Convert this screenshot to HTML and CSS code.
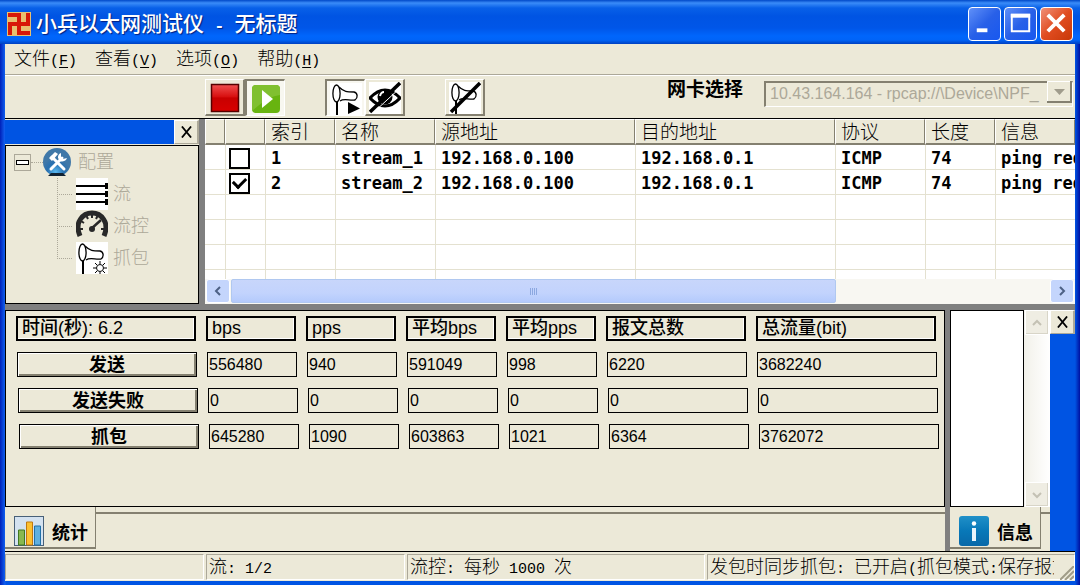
FILE: index.html
```html
<!DOCTYPE html>
<html lang="zh-CN">
<head>
<meta charset="utf-8">
<title>小兵以太网测试仪 - 无标题</title>
<link rel="stylesheet" href="styles.css">
</head>
<body>
<svg class="defs" aria-hidden="true">
  <symbol id="horn" viewBox="0 0 32 32">
    <rect width="32" height="32" fill="#fff"/>
    <path d="M7 18V32" stroke="#000" stroke-width="2"/>
    <path d="M9 4C14 9 17 9 24 9C28 10 28 15 25 17C20 18 14 15 10 18" fill="#fff" stroke="#000" stroke-width="1.3"/>
    <ellipse cx="6.500" cy="10.500" rx="3.600" ry="8.500" fill="#fff" stroke="#000" stroke-width="1.300"/>
  </symbol>
</svg>
<div class="window">
  <header class="titlebar">
    <svg class="logo" viewBox="0 0 24 24" aria-hidden="true">
      <rect width="24" height="24" fill="#e8c070"/>
      <path d="M1 1H14V10H19V1H23V14H14V19H23V23H10V14H5V23H1V10H10V5H1Z" fill="#d81808"/>
    </svg>
    <h1>小兵以太网测试仪<span class="half"> - </span>无标题</h1>
    <button class="winbtn" aria-label="最小化"><svg viewBox="0 0 32 32"><path d="M8 23H19" stroke="#fff" stroke-width="4"/></svg></button>
    <button class="winbtn" aria-label="最大化"><svg viewBox="0 0 32 32"><path d="M7 7H25V24H7Z" fill="none" stroke="#fff" stroke-width="2"/><path d="M6 8H26" stroke="#fff" stroke-width="4"/></svg></button>
    <button class="winbtn close" aria-label="关闭"><svg viewBox="0 0 32 32"><path d="M7 7L24 24M24 7L7 24" stroke="#fff" stroke-width="4"/></svg></button>
  </header>
  <nav class="menu">
    <button>文件<span class="half">(<u>F</u>)</span></button>
    <button>查看<span class="half">(<u>V</u>)</span></button>
    <button>选项<span class="half">(<u>O</u>)</span></button>
    <button>帮助<span class="half">(<u>H</u>)</span></button>
  </nav>
  <div class="toolbar">
    <div class="tools">
      <button class="tool" aria-label="停止"><svg viewBox="0 0 32 32">
        <defs><linearGradient id="red" x2="0" y2="1"><stop offset="0" stop-color="#f05050"/><stop offset=".45" stop-color="#d81010"/><stop offset=".5" stop-color="#c80000"/><stop offset="1" stop-color="#d80000"/></linearGradient></defs>
        <rect x="2.500" y="2.500" width="27" height="27" fill="url(#red)" stroke="#500" stroke-width="1.500"/></svg></button>
      <button class="tool on" aria-label="开始"><svg viewBox="0 0 32 32"><rect x="2" y="2" width="28" height="28" rx="4" fill="#68b410"/><path d="M2 6Q2 2 6 2H26Q30 2 30 6V12Q18 13 2 28Z" fill="#80c030"/><path d="M12 7L23 16L12 25Z" fill="#fff"/></svg></button>
    </div>
    <div class="tools">
      <button class="tool on" aria-label="同步抓包"><svg viewBox="0 0 32 32"><use href="#horn"/><path d="M18 19L30 25.500L18 31Z"/></svg></button>
      <button class="tool" aria-label="隐藏"><svg viewBox="0 0 32 32"><rect width="32" height="32" fill="#fff"/><path d="M1 16Q16 0 31 16Q16 32 1 16Z" fill="none" stroke="#000" stroke-width="3"/><circle cx="16" cy="15" r="7.500"/><path d="M11 14Q12 10 15 10" fill="none" stroke="#fff" stroke-width="2"/><path d="M4 31L32 5" stroke="#fff" stroke-width="1"/><path d="M1 30L31 1" stroke="#000" stroke-width="3.500"/></svg></button>
    </div>
    <div class="tools">
      <button class="tool" aria-label="停止抓包"><svg viewBox="0 0 32 32"><use href="#horn"/><path d="M2 30L31 1" stroke="#000" stroke-width="3.500"/></svg></button>
    </div>
    <label class="nic-label" for="nic">网卡选择</label>
    <div class="combo">
      <select id="nic" disabled><option>10.43.164.164 - rpcap://\Device\NPF_</option></select>
      <svg class="drop" viewBox="0 0 25 22" aria-hidden="true"><rect width="25" height="22" fill="#ece9d8"/><path d="M.5 22V.5H25" fill="none" stroke="#fff"/><path d="M0 21H24V0" fill="none" stroke="#848070" stroke-width="2"/><path d="M7 8H18L12.500 14Z" fill="#a09c8c"/></svg>
    </div>
  </div>

  <main>
    <div class="upper">
      <aside class="side">
        <div class="sidehead"><button class="xbtn" aria-label="关闭配置"><svg viewBox="0 0 12 12"><path d="M1 0L11 12M11 0L1 12"/></svg></button></div>
        <div class="tree">
          <div class="root">
            <span class="minus"></span><span class="dash"></span>
            <svg class="globe" viewBox="0 0 28 28"><defs><radialGradient id="ball" cx=".45" cy=".85"><stop offset="0" stop-color="#58b8f0"/><stop offset=".6" stop-color="#2870b0"/><stop offset="1" stop-color="#4078a8"/></radialGradient></defs>
              <circle cx="14" cy="14" r="14" fill="url(#ball)"/><path d="M5 28H23L20 25H8Z" fill="#123"/><path d="M9 9L21 21M19 10L8 21" stroke="#fff" stroke-width="3" stroke-linecap="round"/><path d="M6 10L12 4L15 6L9 13ZM18 5L18 9L20 11L24 10A5 5 0 0 1 17 13L15 10A5 5 0 0 1 18 5Z" fill="#fff"/></svg>
            <span class="name">配置</span>
          </div>
          <ul>
            <li><svg viewBox="0 0 32 32"><rect width="32" height="32" fill="#fff"/><path d="M0 8H32M0 16H32M0 24H32" stroke="#000" stroke-width="2"/><path d="M30.500 5V11M30.500 13V19M30.500 21V27" stroke="#000" stroke-width="3"/></svg><span class="name">流</span></li>
            <li><svg viewBox="0 0 32 32"><path d="M4 26C-2 12 7 3 16 3S34 12 28 26" fill="none" stroke="#282828" stroke-width="5"/><path d="M5 11L8 13M10 5L12 9M16 3V8M22 5L20 9M2 19H7M25 19H30" stroke="#282828" stroke-width="2"/><path d="M15 19L25 10" stroke="#282828" stroke-width="2.500"/><circle cx="16" cy="19" r="3" fill="#282828"/></svg><span class="name">流控</span></li>
            <li><svg viewBox="0 0 32 32"><use href="#horn"/><circle cx="24" cy="26" r="3.500" fill="#fff" stroke="#000"/><path d="M24 19V22M24 30V32M17 26H20M28 26H31M19 21L21 23M29 21L27 23M19 31L21 29M29 31L27 29" stroke="#000"/></svg><span class="name">抓包</span></li>
          </ul>
        </div>
      </aside>
      <section class="streams">
        <div class="tablewrap">
          <table>
            <colgroup><col class="c20"><col class="c40"><col class="c70"><col class="c100"><col class="c200"><col class="c200"><col class="c90"><col class="c70"><col></colgroup>
            <thead><tr><th></th><th></th><th>索引</th><th>名称</th><th>源地址</th><th>目的地址</th><th>协议</th><th>长度</th><th>信息</th></tr></thead>
            <tbody>
              <tr><td></td><td class="pick"><input type="checkbox" aria-label="stream_1"></td><td>1</td><td>stream_1</td><td>192.168.0.100</td><td>192.168.0.1</td><td>ICMP</td><td>74</td><td>ping req</td></tr>
              <tr><td></td><td class="pick"><input type="checkbox" aria-label="stream_2" checked></td><td>2</td><td>stream_2</td><td>192.168.0.100</td><td>192.168.0.1</td><td>ICMP</td><td>74</td><td>ping req</td></tr>
              <tr><td></td><td></td><td></td><td></td><td></td><td></td><td></td><td></td><td></td></tr>
              <tr><td></td><td></td><td></td><td></td><td></td><td></td><td></td><td></td><td></td></tr>
              <tr><td></td><td></td><td></td><td></td><td></td><td></td><td></td><td></td><td></td></tr>
              <tr><td></td><td></td><td></td><td></td><td></td><td></td><td></td><td></td><td></td></tr>
            </tbody>
          </table>
        </div>
        <div class="hscroll">
          <button aria-label="向左"><svg viewBox="0 0 8 10"><path d="M6 1L2 5L6 9"/></svg></button>
          <div class="thumb"><i></i><i></i><i></i><i></i></div>
          <div class="rest"></div>
          <button aria-label="向右"><svg viewBox="0 0 8 10"><path d="M2 1L6 5L2 9"/></svg></button>
        </div>
      </section>
    </div>

    <div class="lower">
      <section class="stats">
        <div class="statbox">
          <div class="row heads"><span class="w180">时间(秒): 6.2</span><span>bps</span><span>pps</span><span>平均bps</span><span>平均pps</span><span class="w140">报文总数</span><span class="w180">总流量(bit)</span></div>
          <div class="row r1"><button class="w180">发送</button><output>556480</output><output>940</output><output>591049</output><output>998</output><output class="w140">6220</output><output class="w180">3682240</output></div>
          <div class="row r2"><button class="w180">发送失败</button><output>0</output><output>0</output><output>0</output><output>0</output><output class="w140">0</output><output class="w180">0</output></div>
          <div class="row r3"><button class="w180">抓包</button><output>645280</output><output>1090</output><output>603863</output><output>1021</output><output class="w140">6364</output><output class="w180">3762072</output></div>
        </div>
        <div class="tabs">
          <button class="tab"><svg viewBox="0 0 30 30"><rect x=".5" y=".5" width="29" height="29" fill="#d4e2f0" stroke="#486078"/><path d="M4.500 29V14H10.500V29Z" fill="#88b850" stroke="#407820"/><path d="M12.500 29V6H18.500V29Z" fill="#fcc030" stroke="#c07810"/><path d="M20.500 29V10H26.500V29Z" fill="#60b0e0" stroke="#2070a8"/></svg>统计</button>
          <div class="tabrest"></div>
        </div>
      </section>
      <section class="info">
        <div class="infobody">
          <div class="list"></div>
          <div class="vscroll">
            <button disabled aria-label="向上"><svg viewBox="0 0 10 8"><path d="M1 6L5 2L9 6"/></svg></button>
            <button disabled aria-label="向下"><svg viewBox="0 0 10 8"><path d="M1 2L5 6L9 2"/></svg></button>
          </div>
        </div>
        <div class="tabs">
          <button class="tab"><svg viewBox="0 0 30 30"><defs><linearGradient id="blue" x2="0" y2="1"><stop offset="0" stop-color="#2090c8"/><stop offset=".5" stop-color="#0878b8"/><stop offset="1" stop-color="#0868a8"/></linearGradient></defs><rect width="30" height="30" rx="3" fill="url(#blue)"/><circle cx="15" cy="7.500" r="2.200" fill="#fff"/><path d="M15 12V25" stroke="#e8f4fc" stroke-width="4"/></svg>信息</button>
          <div class="tabrest"></div>
        </div>
      </section>
      <div class="dock"><button class="xbtn" aria-label="关闭信息"><svg viewBox="0 0 12 12"><path d="M1 0L11 12M11 0L1 12"/></svg></button></div>
    </div>
  </main>

  <footer class="status">
    <div></div>
    <div>流<span class="half">: 1/2</span></div>
    <div class="w300">流控<span class="half">: </span>每秒<span class="half"> 1000 </span>次</div>
    <div class="last"><p>发包时同步抓包<span class="half">: </span>已开启<span class="half">(</span>抓包模式<span class="half">:</span>保存报文</p></div>
    <svg class="grip" viewBox="0 0 14 14"><path d="M0 14L14 0M5 14L14 5M10 14L14 10" stroke="#a09c88" stroke-width="2"/></svg>
  </footer>
</div>
</body>
</html>
```
FILE: styles.css
```css
* { box-sizing: border-box; }
body { margin: 0; background: #0054e3; color: #000; }
button { font: inherit; color: inherit; padding: 0; margin: 0; border: 0; background: none; }
svg { display: block; flex: none; }
.defs { position: absolute; width: 0; height: 0; }

.window {
  display: flex;
  flex-direction: column;
  min-height: 100vh;
  padding: 0 5px 4px;
  background: linear-gradient(90deg, #0020b8, #1060f0 5px, #0054e3 6px, #0054e3 calc(100% - 5px), #0010a0);
  font: 300 18px/24px "Noto Sans CJK SC", sans-serif;
}
.half { font: 400 15px/1 "Liberation Mono", monospace; white-space: pre; }

.titlebar {
  display: flex;
  align-items: center;
  height: 44px;
  gap: 3px;
  margin: 0 -5px;
  padding: 3px 7px 0;
  background: linear-gradient(#0048c8, #3a8cf8 3px, #0860e8 8px, #0054e3 16px, #0056e8 28px, #0066fc 36px, #0064f8 40px, #0040c0);
}
.logo { width: 24px; height: 24px; }
.titlebar h1 {
  flex: 1;
  margin: 0 0 4px 2px;
  font-size: 21px;
  line-height: 30px;
  font-weight: 500;
  color: #fff;
  text-shadow: 1px 1px 1px #002080;
}
.titlebar .half { font-size: 17px; font-weight: 700; }
.winbtn {
  width: 33px;
  height: 34px;
  border: 1px solid #fff;
  border-radius: 4px;
  background: linear-gradient(135deg, #6090f8, #2860e8 50%, #1858f0);
}
.winbtn.close { background: linear-gradient(135deg, #f09078, #e04c20 50%, #c83808); }

.menu {
  display: flex;
  height: 31px;
  padding: 0 9px 4px;
  gap: 18px;
  background: #ece9d8;
  border-bottom: 1px solid #aca899;
}
.menu u { text-underline-offset: 2px; }

.toolbar {
  display: flex;
  align-items: flex-start;
  height: 44px;
  padding: 3px 2px 0 200px;
  background: #ece9d8;
  border-top: 1px solid #fff;
  border-bottom: 1px solid #000;
}
.tools { display: flex; margin-right: 40px; }
.tool {
  width: 40px;
  height: 37px;
  padding: 2px 3px;
  border: solid;
  border-width: 1px 2px 2px 1px;
  border-color: #fff #848070 #848070 #fff;
}
.tool.on {
  border-width: 2px 1px 1px 2px;
  border-color: #848070 #fff #fff #848070;
  background: #f8f7f0;
}
.tool svg { width: 32px; height: 32px; }
.nic-label { margin-left: auto; margin-right: 21px; line-height: 18px; font-size: 19px; font-weight: 700; }
.combo { position: relative; width: 309px; height: 26px; }
.combo select {
  width: 100%;
  height: 100%;
  padding: 0 26px 0 4px;
  appearance: none;
  border: solid;
  border-width: 2px 1px 1px 2px;
  border-color: #848070 #fff #fff #848070;
  border-radius: 0;
  background: #ece9d8;
  color: #aca899;
  opacity: 1;
  font: 16px/20px "Liberation Sans", Arial, sans-serif;
}
.drop {
  position: absolute;
  top: 2px;
  right: 1px;
  width: 25px;
  height: 22px;
}

main { flex: 1; display: flex; flex-direction: column; gap: 6px; background: #808080; }
.upper { display: flex; gap: 6px; height: 185px; }
.side { width: 194px; display: flex; flex-direction: column; }
.sidehead { display: flex; justify-content: flex-end; height: 26px; background: #0054e3; border-top: 1px solid #ece9d8; border-bottom: 1px solid #ece9d8; }
.xbtn {
  display: grid;
  place-items: center;
  width: 25px;
  height: 24px;
  background: #ece9d8;
  border: solid;
  border-width: 1px 2px 1px 1px;
  border-color: #fff #aca899 #aca899 #fff;
}
.xbtn svg { width: 11px; height: 12px; fill: none; stroke: #000; stroke-width: 2; }
.tree { flex: 1; background: #ece9d8; border: 1px solid #000; color: #aca899; }
.root { display: flex; align-items: center; height: 32px; padding-left: 8px; }
.minus { display: grid; place-items: center; width: 17px; height: 17px; border: 1px solid #aca899; }
.minus::after { content: ""; width: 11px; height: 3px; border: 1px solid #000; background: #fff; }
.dash { width: 12px; border-top: 1px dotted #aca899; }
.globe { width: 28px; height: 28px; margin-right: 7px; }
.name { padding-bottom: 4px; }
.tree ul { list-style: none; margin: 0 0 0 51px; padding: 0; }
.tree li { display: flex; align-items: center; gap: 5px; height: 32px; }
.tree li::before {
  content: "";
  align-self: flex-start;
  width: 14px;
  height: 16px;
  margin-right: -1px;
  border: dotted #aca899;
  border-width: 0 0 1px 1px;
}
.tree li + li::before { height: 32px; margin-top: -16px; }
.tree li svg { width: 32px; height: 32px; }

.streams { flex: 1; min-width: 0; display: flex; flex-direction: column; background: #fff; }
.tablewrap { flex: 1; min-height: 0; overflow: hidden; }
table { width: 100%; table-layout: fixed; border-collapse: separate; border-spacing: 0; }
.c20 { width: 20px; }
.c40 { width: 40px; }
.c70 { width: 70px; }
.c90 { width: 90px; }
.c100 { width: 100px; }
.c200 { width: 200px; }
th {
  height: 26px;
  padding: 0 5px 1px;
  text-align: left;
  font-size: 19px;
  line-height: 22px;
  font-weight: 300;
  background: #ece9d8;
  border: solid;
  border-width: 1px 1px 2px 1px;
  border-color: #fff #848070 #848070 #fff;
}
td {
  height: 25px;
  padding: 2px 5px 0;
  border-bottom: 1px solid #e4e1d0;
  border-left: 1px solid #e4e1d0;
  font: 700 17px/22px "DejaVu Sans Mono", monospace;
  white-space: nowrap;
  overflow: hidden;
}
td:first-child { border-left: 0; }
td.pick { padding: 0 3px; }
.pick input {
  display: grid;
  place-items: center;
  appearance: none;
  width: 21px;
  height: 21px;
  margin: 2px 0 0;
  border: 2px solid #000;
  background: #fff;
}
.pick input:checked::after { content: ""; width: 6px; height: 10px; margin-bottom: 3px; border: solid #000; border-width: 0 3px 3px 0; transform: rotate(45deg); }

.hscroll { display: flex; height: 25px; padding: 0 1px 1px; background: #f8f7f2; }
.hscroll button {
  display: grid;
  place-items: center;
  width: 24px;
  border: 1px solid #fff;
  border-radius: 3px;
  background: #c4d5fc;
}
.hscroll svg { width: 8px; height: 10px; fill: none; stroke: #4d6185; stroke-width: 2; }
.thumb {
  flex: 604;
  display: flex;
  align-items: center;
  justify-content: center;
  gap: 1px;
  margin-left: 1px;
  border: 1px solid #b0c8f0;
  border-radius: 2px;
  background: linear-gradient(#c8d6fb, #c2d3fd 60%, #b4cafc);
}
.thumb i { width: 1px; height: 7px; background: #8ca8e0; }
.rest { flex: 214; }

.lower { flex: 1; display: flex; }
.stats { flex: 1; min-width: 0; display: flex; flex-direction: column; background: #ece9d8; }
.statbox {
  flex: 1;
  display: flex;
  flex-direction: column;
  gap: 11px;
  padding: 5px 10px 0;
  overflow: hidden;
  border: 1px solid #000;
}
.row { display: flex; gap: 10px; }
.r1 { padding-left: 1px; }
.r2 { padding-left: 2px; }
.r3 { padding-left: 3px; }
.row > * { flex: none; width: 90px; height: 25px; border: 1px solid #000; white-space: nowrap; }
.row > .w140 { width: 140px; }
.row > .w180 { width: 180px; }
.heads > * {
  border-width: 2px;
  padding-left: 4px;
  font: 500 18px/21px "Liberation Sans", "Noto Sans CJK SC", sans-serif;
  box-shadow: inset -1px -1px #fff;
}
.row output { padding-left: 1px; font: 16px/23px "Liberation Sans", Arial, sans-serif; }
.row button { padding-bottom: 4px; font-weight: 700; line-height: 18px; box-shadow: inset 1px 1px #fff, inset -2px -2px #848070; }

.tabs { display: flex; height: 44px; }
.tab {
  display: flex;
  align-items: center;
  gap: 8px;
  margin-bottom: 2px;
  padding: 8px 7px 0 9px;
  font-weight: 700;
  border: solid #848070;
  border-width: 0 1px 2px 0;
}
.tab svg { width: 30px; height: 30px; }
.tabrest { flex: 1; margin-top: 5px; border: solid #848070; border-width: 2px 0 0; }
.info { display: flex; flex-direction: column; width: 100px; margin-left: 5px; background: #ece9d8; }
.infobody { flex: 1; display: flex; }
.list { flex: 1; background: #fff; border: 1px solid #000; }
.vscroll { display: flex; flex-direction: column; justify-content: space-between; width: 26px; background: linear-gradient(90deg, #f2f1ea, #fff); }
.vscroll button { display: grid; place-items: center; height: 25px; margin: 0 1px; border: 1px solid #fff; box-shadow: inset -1px -1px #d8d5c8; background: #efede3; }
.vscroll svg { width: 10px; height: 8px; fill: none; stroke: #c4c1b4; stroke-width: 2; }
.dock { width: 25px; background: #0054e3; }

.status {
  display: flex;
  gap: 2px;
  height: 30px;
  padding: 2px 0 1px;
  background: #ece9d8;
  border-top: 1px solid #000;
  position: relative;
  line-height: 21px;
}
.status div { width: 199px; padding-left: 2px; overflow: hidden; white-space: nowrap; border: 1px solid; border-color: #aca899 #fff #fff #aca899; }
.status .w300 { width: 298px; }
.status .last { flex: 1; padding-right: 20px; }
.last p { margin: 0; overflow: hidden; }
.grip { position: absolute; right: 1px; bottom: 1px; width: 14px; height: 14px; }
```
